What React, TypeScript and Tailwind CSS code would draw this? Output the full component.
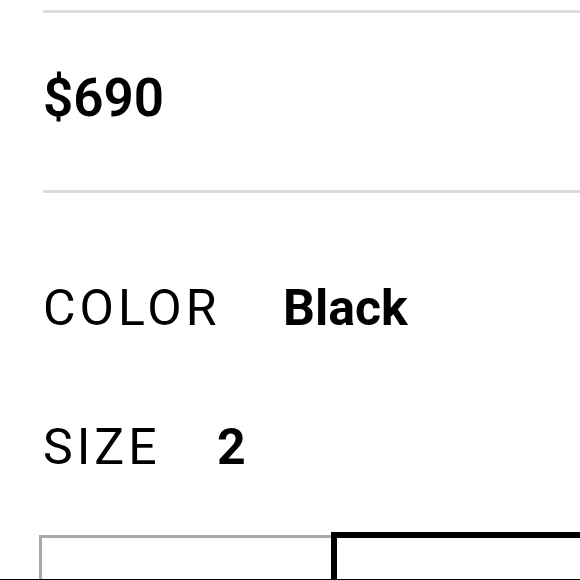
export default function App() {
  return (
    <div className="w-[580px] h-[580px] overflow-hidden bg-white border-b border-black font-['Roboto','Liberation_Sans',sans-serif] text-black">
      <div className="pl-[43px] pt-[10px]">
        {/* price */}
        <div className="border-t-[3px] border-[#dcdcdc] pt-[59px] pb-[65px]">
          <div className="text-[53px] leading-none font-semibold">$690</div>
        </div>

        {/* options */}
        <div className="border-t-[3px] border-[#dcdcdc] pt-[90px]">
          <div className="flex items-baseline text-[50px] leading-none">
            <span className="tracking-[0.08em] w-[240px]">COLOR</span>
            <span className="font-bold">Black</span>
          </div>
          <div className="flex items-baseline text-[50px] leading-none mt-[89px]">
            <span className="tracking-[0.08em] w-[174px]">SIZE</span>
            <span className="font-bold">2</span>
          </div>
        </div>
      </div>

      {/* size swatches */}
      <div className="flex items-start pl-[39px] mt-[60px]">
        <div className="w-[292px] h-[80px] mt-[3px] border-[3px] border-r-0 border-[#a9a9a9] shrink-0" />
        <div className="w-[292px] h-[80px] border-[6px] border-black shrink-0" />
      </div>
    </div>
  );
}
